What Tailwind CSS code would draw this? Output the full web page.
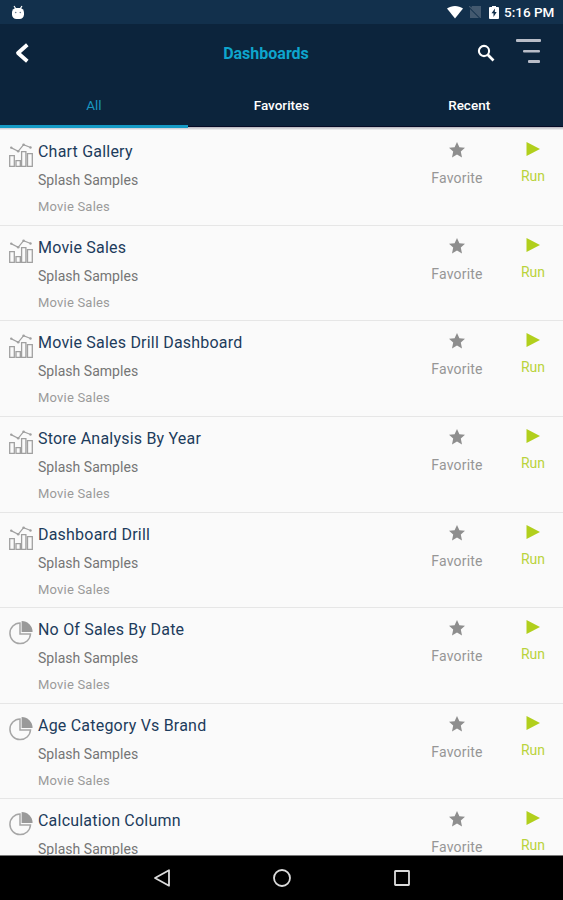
<!DOCTYPE html>
<html lang="en">
<head>
  <meta charset="UTF-8" />
  <meta name="viewport" content="width=device-width, initial-scale=1" />
  <title>Dashboards</title>
  <script src="https://cdn.jsdelivr.net/npm/@tailwindcss/browser@4"></script>
  <style>
    body {
      font-family: Roboto, 'Liberation Sans', sans-serif;
    }
  </style>
</head>
<body class="bg-[#fafafa] w-[563px] h-[900px] flex flex-col overflow-hidden">
  <!-- Status bar -->
  <div class="h-6 shrink-0 bg-[#12304c] flex items-center pl-[11px] pr-[8px] text-white">
    <svg class="w-[14px] h-[15px]" viewBox="0 0 14 15" fill="#fff">
      <path d="M3 1l2 3M11 1L9 4" stroke="#fff" stroke-width="1.2" />
      <rect x="1" y="3" width="12" height="11" rx="4.5" />
      <circle cx="4.7" cy="7.5" r=".8" fill="#6b7d90" />
      <circle cx="9.3" cy="7.5" r=".8" fill="#6b7d90" />
    </svg>
    <svg class="w-4 h-[14px] ml-auto" viewBox="0 0 16 14" fill="#fff">
      <path d="M0 3.5C4.5 0 11.5 0 16 3.5L8 13.5z" />
    </svg>
    <svg class="w-3 h-3 ml-[6px]" viewBox="0 0 12 12">
      <path d="M3 0h9v12L2 2zM1 3l9 9H1z" fill="#43596f" />
      <path d="M0 0l12 12" stroke="#43596f" stroke-width="1.2" />
    </svg>
    <svg class="w-[10px] h-[13px] ml-[8px]" viewBox="0 0 10 13">
      <path d="M1 1h2V0h4v1h2q1 0 1 1v10q0 1-1 1H1q-1 0-1-1V2q0-1 1-1z" fill="#fff" />
      <path d="M6 2.5L2.5 7.3h2V11l3.2-5H5.8z" fill="#12304c" />
    </svg>
    <span class="ml-[5px] w-[51px] whitespace-nowrap text-[13.5px] leading-6 font-medium">5:16 PM</span>
  </div>

  <!-- Header -->
  <header class="h-[57px] shrink-0 bg-[#0c243c] grid grid-cols-3 items-center">
    <svg class="w-[14px] h-[20px] ml-[15px]" viewBox="0 0 14 20" fill="none" stroke="#fff" stroke-width="3.8">
      <path d="M12.3 1.8L3 10l9.3 8.2" stroke-linejoin="round" />
    </svg>
    <h1 class="text-center text-[16px] font-bold text-[#0ea5cd] pt-[2px] pr-[31px]">Dashboards</h1>
    <div class="flex justify-end items-center pr-[22px]">
      <svg class="w-[18px] h-[18px] mr-[21px]" viewBox="0 0 18 18" fill="none" stroke="#fff">
        <circle cx="7" cy="7" r="5.1" stroke-width="2.1" />
        <path d="M10.8 10.8l5.7 5.7" stroke-width="2.7" />
      </svg>
      <svg class="w-[25px] h-[26px] -mt-[3px]" viewBox="0 0 25 26" fill="#b9bdc8">
        <rect x="0" y="1" width="25" height="3" rx="1" />
        <rect x="7" y="12" width="17" height="2.5" rx="1" />
        <rect x="12" y="22" width="12" height="3" rx="1" />
      </svg>
    </div>
  </header>

  <!-- Tabs -->
  <nav class="h-[46px] shrink-0 bg-[#0c243c] grid grid-cols-3 text-center text-[13.5px] leading-[49px] font-medium text-white border-b border-[#050b26]">
    <span class="h-[47px] font-normal text-[#1996c0] border-b-[3px] border-[#159bc6] relative">All</span>
    <span>Favorites</span>
    <span>Recent</span>
  </nav>
  <div class="h-[3px] shrink-0 bg-linear-to-b from-[#b5b3bc] to-[#f4f4f5]"></div>

  <!-- List -->
  <main id="list" class="flex-1 min-h-0 overflow-hidden"></main>

  <!-- Navigation bar -->
  <footer class="h-[45px] shrink-0 bg-black border-t border-[#777777] flex items-center justify-center">
    <svg class="w-[18px] h-[18px]" viewBox="0 0 18 18" fill="none" stroke="#dcdcdc" stroke-width="1.8">
      <path d="M16 1.3v15.4L2 9z" stroke-linejoin="round" />
    </svg>
    <svg class="w-[20px] h-[20px] mx-[101px]" viewBox="0 0 20 20" fill="none" stroke="#dcdcdc" stroke-width="1.8">
      <circle cx="10" cy="10" r="8" />
    </svg>
    <svg class="w-[18px] h-[18px]" viewBox="0 0 18 18" fill="none" stroke="#dcdcdc" stroke-width="1.8">
      <rect x="2" y="2" width="14" height="14" rx=".5" />
    </svg>
  </footer>

  <!-- Script -->
  <script>
    const chartIcon = `<svg class="w-6 h-6" viewBox="0 0 24 24" fill="none" stroke="#a0a0a0" stroke-width="1.3">
      <path d="M.7 12.600h4.600v10.700H.7zM7 17.600h4.300v5.700H7zM12.600 8.600h4.300v14.700h-4.300zM18.500 10.600h4.800v12.700h-4.800z" />
      <path d="M2 4.600l7.200 3.700L14.600 1.700l7 2.800" />
      <g fill="#a0a0a0" stroke="none"><circle cx="2.200" cy="4.600" r="1.200" /><circle cx="9.200" cy="8.200" r="1.300" /><circle cx="14.600" cy="1.800" r="1.300" /><circle cx="21.500" cy="4.500" r="1.200" /></g>
    </svg>`;
    const pieIcon = `<svg class="w-6 h-6" viewBox="0 0 24 24">
      <path d="M11 2A10.300 10.300 0 1 0 21.500 13H11z" fill="none" stroke="#a6a6a6" stroke-width="1.500" />
      <path d="M12.600 0A11 11 0 0 1 23.600 11H12.600z" fill="#999999" />
    </svg>`;

    // title, icon, category
    const items = [
      ["Chart Gallery", chartIcon, "Movie Sales"],
      ["Movie Sales", chartIcon, "Movie Sales"],
      ["Movie Sales Drill Dashboard", chartIcon, "Movie Sales"],
      ["Store Analysis By Year", chartIcon, "Movie Sales"],
      ["Dashboard Drill", chartIcon, "Movie Sales"],
      ["No Of Sales By Date", pieIcon, "Movie Sales"],
      ["Age Category Vs Brand", pieIcon, "Movie Sales"],
      ["Calculation Column", pieIcon, ""]
    ];

    document.getElementById("list").innerHTML = items.map(([title, icon, category]) => `
      <div class="h-[95.65px] flex items-start border-b border-[#e6e6e6]">
        <div class="pl-[9px] pt-[13px] w-[38px]">${icon}</div>
        <div class="flex-1 pt-[12px] whitespace-nowrap">
          <p class="text-[16px] leading-5 tracking-[0.21px] text-[#1d3c5c]">${title}</p>
          <p class="text-[14px] leading-5 mt-[8px] tracking-[0.03px] text-[#757575]">Splash Samples</p>
          <p class="text-[13px] leading-5 mt-[7px] tracking-[0.2px] text-[#9a9a9a]">${category}</p>
        </div>
        <div class="w-[60px] pt-[12px] mr-[16px] flex flex-col items-center text-[#969696]">
          <svg class="w-4 h-4" viewBox="0 0 16 16" fill="#8e8e8e"><path d="M8 0l2.400 5.200 5.600.6-4.200 3.800L13 15.500 8 12.500l-5 3 1.200-5.900L0 5.800l5.600-.6z" /></svg>
          <span class="text-[14px] leading-5 mt-[10px] tracking-[0.2px]">Favorite</span>
        </div>
        <div class="w-[60px] pt-[12px] flex flex-col items-center text-[#b9d33c]">
          <svg class="w-[14px] h-[14px]" viewBox="0 0 14 14" fill="#b1cf1c"><path d="M.5 0L14 7 .5 14z" /></svg>
          <span class="text-[14px] leading-5 mt-[10px]">Run</span>
        </div>
      </div>`).join("");
  </script>
</body>
</html>
